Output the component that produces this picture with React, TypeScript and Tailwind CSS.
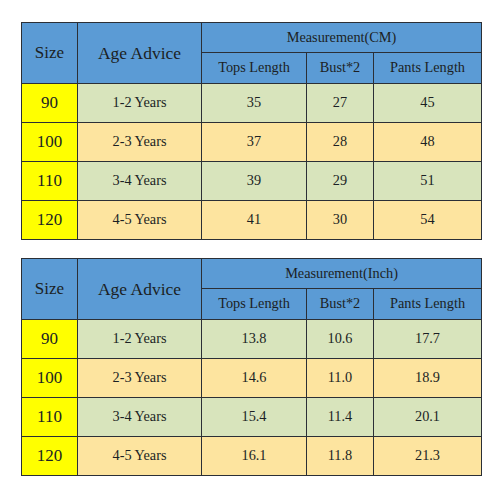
const cm = [
  ["90", "1-2 Years", "35", "27", "45"],
  ["100", "2-3 Years", "37", "28", "48"],
  ["110", "3-4 Years", "39", "29", "51"],
  ["120", "4-5 Years", "41", "30", "54"],
];

const inch = [
  ["90", "1-2 Years", "13.8", "10.6", "17.7"],
  ["100", "2-3 Years", "14.6", "11.0", "18.9"],
  ["110", "3-4 Years", "15.4", "11.4", "20.1"],
  ["120", "4-5 Years", "16.1", "11.8", "21.3"],
];

function SizeTable({ unit, rows }: { unit: string; rows: string[][] }) {
  const cell = "border border-[#2b2f36] text-center align-middle p-0";
  return (
    <table className="table-fixed border-collapse w-[460px] border border-[#6f6f62] text-[#1b1f24]">
      <colgroup>
        <col className="w-[56px]" />
        <col className="w-[124px]" />
        <col className="w-[105px]" />
        <col className="w-[67px]" />
        <col className="w-[108px]" />
      </colgroup>
      <thead>
        <tr className="h-[30px] bg-[#5b9bd5]">
          <th rowSpan={2} className={`${cell} font-normal text-[17px]`}>
            Size
          </th>
          <th rowSpan={2} className={`${cell} font-normal text-[17.5px]`}>
            Age Advice
          </th>
          <th colSpan={3} className={`${cell} font-normal text-[14.3px]`}>
            Measurement({unit})
          </th>
        </tr>
        <tr className="h-[31px] bg-[#5b9bd5]">
          <th className={`${cell} font-normal text-[14.3px]`}>Tops Length</th>
          <th className={`${cell} font-normal text-[14.3px]`}>Bust*2</th>
          <th className={`${cell} font-normal text-[14.3px]`}>Pants Length</th>
        </tr>
      </thead>
      <tbody>
        {rows.map((r, i) => (
          <tr
            key={r[0]}
            className={`h-[39px] ${i % 2 === 0 ? "bg-[#d8e4bc]" : "bg-[#fde49f]"}`}
          >
            <td className={`${cell} bg-[#ffff00] text-[17px]`}>{r[0]}</td>
            <td className={`${cell} text-[14.3px]`}>{r[1]}</td>
            <td className={`${cell} text-[14.3px]`}>{r[2]}</td>
            <td className={`${cell} text-[14.3px]`}>{r[3]}</td>
            <td className={`${cell} text-[14.3px]`}>{r[4]}</td>
          </tr>
        ))}
      </tbody>
    </table>
  );
}

export default function App() {
  return (
    <div className="w-[500px] h-[500px] bg-white pl-[21px] pt-[22px] flex flex-col gap-[18px] font-['Liberation_Serif','Times_New_Roman',serif]">
      <SizeTable unit="CM" rows={cm} />
      <SizeTable unit="Inch" rows={inch} />
    </div>
  );
}
